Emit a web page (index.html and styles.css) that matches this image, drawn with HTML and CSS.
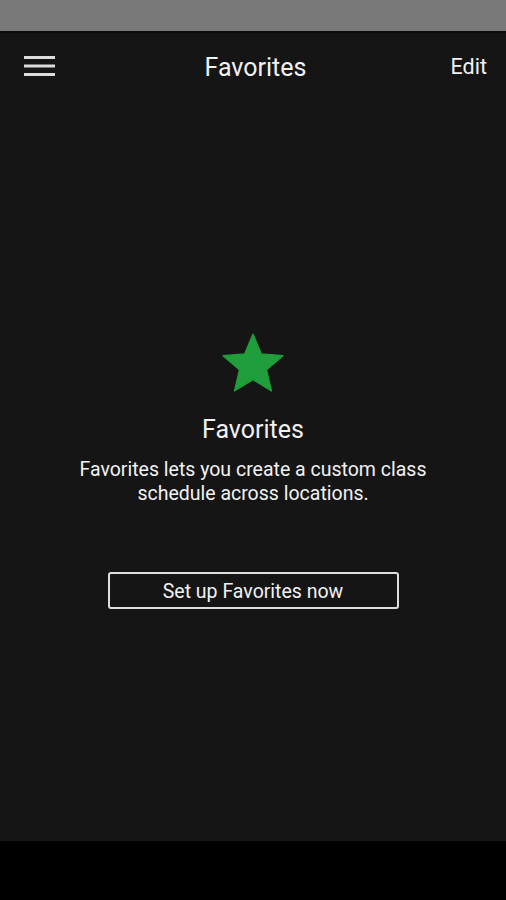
FILE: index.html
```html
<!DOCTYPE html>
<html lang="en">
<head>
<meta charset="UTF-8">
<meta name="viewport" content="width=device-width, initial-scale=1.0">
<title>Favorites</title>
<link rel="stylesheet" href="styles.css">
</head>
<body>
  <!-- ステータスバー -->
  <div class="status-bar"></div>

  <div class="screen">
    <header class="top-bar">
      <div class="menu-btn">
        <svg width="31" height="21" viewBox="0 0 31 21">
          <rect x="0" y="1" width="31" height="3" fill="#dcdcdc"/>
          <rect x="0" y="9.5" width="31" height="3" fill="#dcdcdc"/>
          <rect x="0" y="18" width="31" height="3" fill="#dcdcdc"/>
        </svg>
      </div>
      <h1 class="top-title">Favorites</h1>
      <div class="edit-btn">Edit</div>
    </header>

    <main class="empty">
      <svg class="star" width="72" height="72" viewBox="0 0 24 24">
        <path d="M12 17.27L18.18 21l-1.64-7.03L22 9.24l-7.19-.61L12 2 9.19 8.63 2 9.24l5.46 4.73L5.82 21z" fill="#1f9e3b" stroke="#1f9e3b" stroke-width="0.4" stroke-linejoin="round"/>
      </svg>
      <h2 class="empty-title">Favorites</h2>
      <p class="empty-text">Favorites lets you create a custom class<br>schedule across locations.</p>
      <button class="setup-btn">Set up Favorites now</button>
    </main>
  </div>

  <!-- ナビゲーションバー -->
  <div class="nav-bar"></div>
</body>
</html>
```

FILE: styles.css
```css
body {
  margin: 0;
  padding: 0;
  font-family: Roboto, 'Liberation Sans', sans-serif;
  background-color: #151515;
  color: #f2f2f2;
  height: 900px;
  display: flex;
  flex-direction: column;
  overflow: hidden;
}

.status-bar {
  height: 31px;
  background-color: #787878;
  border-bottom: 2px solid #0c0c0c;
}

.screen {
  flex: 1;
  display: flex;
  flex-direction: column;
  background-color: #151515;
}

.top-bar {
  height: 68px;
  display: grid;
  grid-template-columns: 1fr auto 1fr;
  align-items: center;
  padding: 0 19px 0 24px;
}

.menu-btn {
  display: flex;
  align-items: center;
  margin-top: -3px;
}

.top-title {
  margin: 1px 0 0;
  font-size: 25px;
  font-weight: 400;
  line-height: 28px;
}

.edit-btn {
  justify-self: end;
  font-size: 21.5px;
  line-height: 28px;
}

.empty {
  flex: 1;
  display: flex;
  flex-direction: column;
  align-items: center;
  padding-top: 227px;
  text-align: center;
}

.star {
  display: block;
}

.empty-title {
  margin: 15px 0 0;
  font-size: 25px;
  font-weight: 400;
  line-height: 30px;
}

.empty-text {
  margin: 13px 0 0;
  font-size: 19.5px;
  line-height: 24px;
}

.setup-btn {
  margin-top: 66px;
  width: 291px;
  height: 37px;
  background: transparent;
  border: 2px solid #dedede;
  border-radius: 3px;
  color: #f2f2f2;
  font-family: Roboto, 'Liberation Sans', sans-serif;
  font-size: 19.5px;
  padding: 2px 0 0;
}

.nav-bar {
  height: 59px;
  background-color: #000;
}
```
